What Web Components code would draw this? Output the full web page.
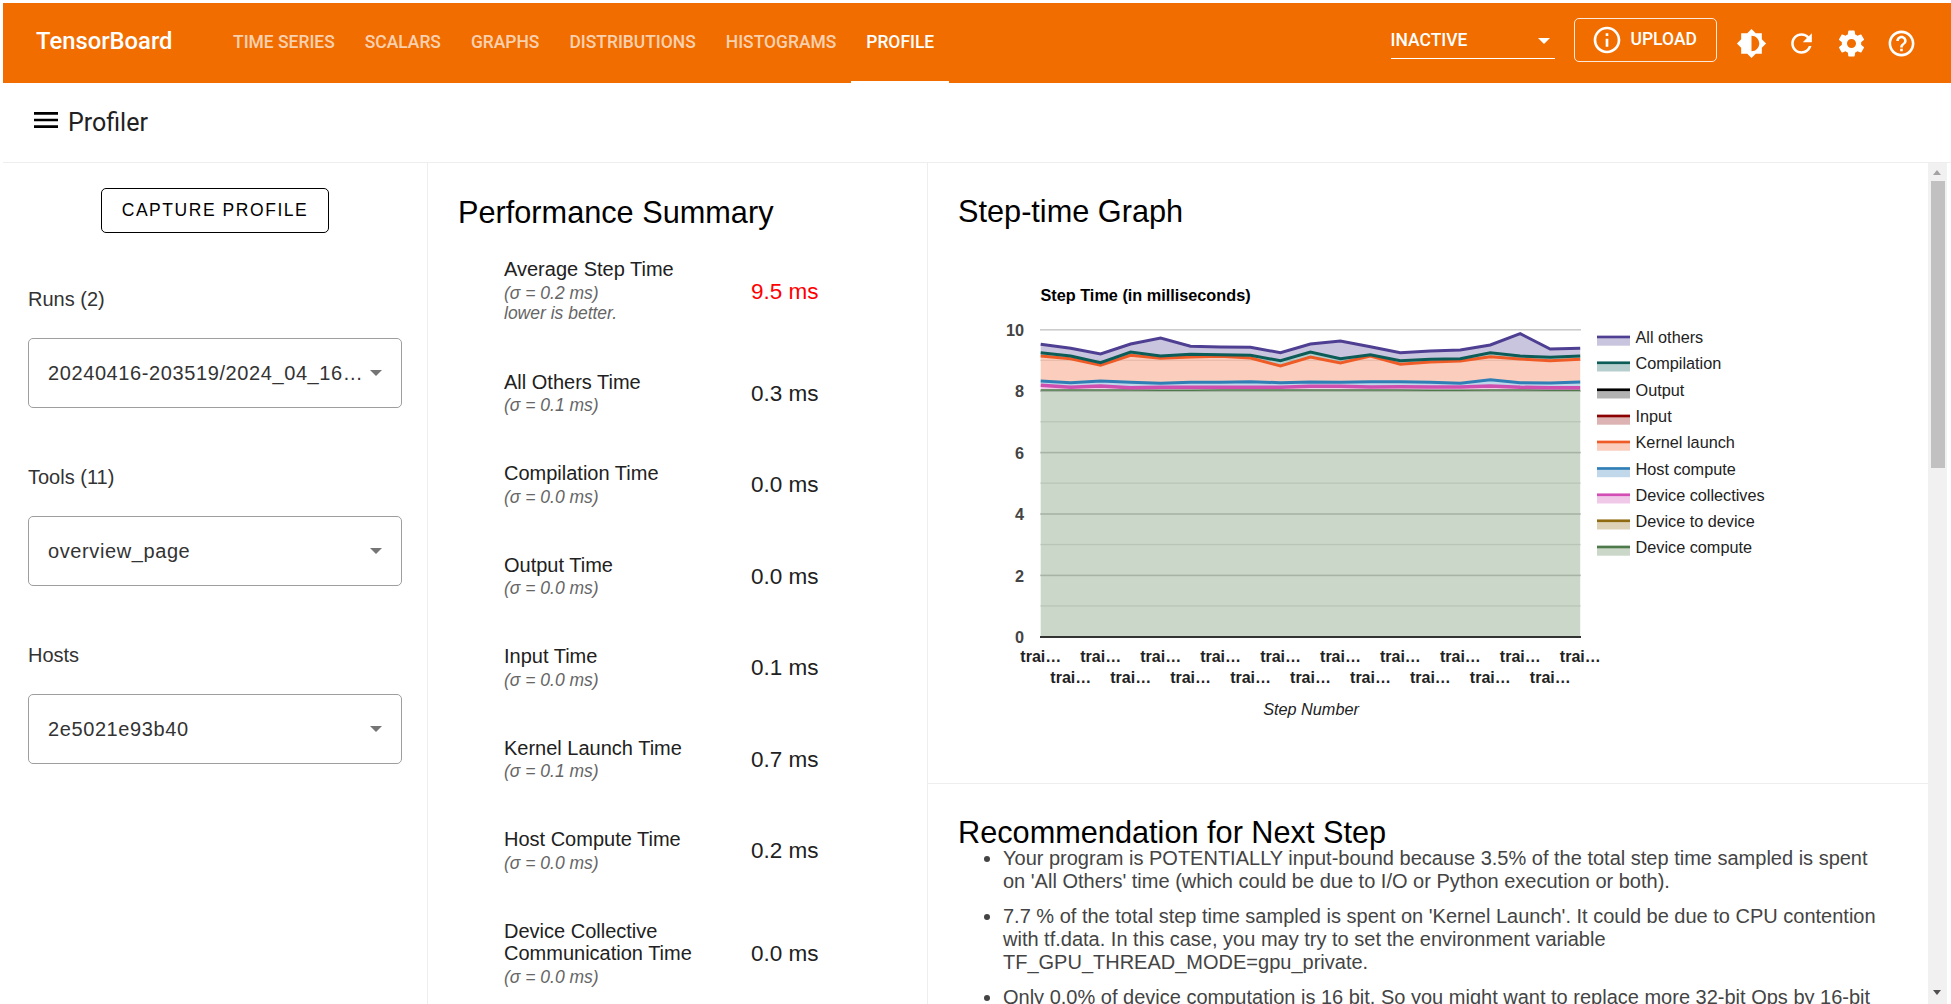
<!DOCTYPE html>
<html lang="en">
<head>
<meta charset="utf-8">
<title>TensorBoard</title>
<style>
html,body{margin:0;padding:0;height:100%;overflow:hidden;background:#fff}
body{padding:3px 0 0 3px;box-sizing:border-box;font-family:"Liberation Sans",Arial,sans-serif}
</style>
</head>
<body>
<tb-app>
  <tb-toolbar slot="top">
    <tb-tab>TIME SERIES</tb-tab><tb-tab>SCALARS</tb-tab><tb-tab>GRAPHS</tb-tab><tb-tab>DISTRIBUTIONS</tb-tab><tb-tab>HISTOGRAMS</tb-tab><tb-tab active>PROFILE</tb-tab>
  </tb-toolbar>
  <profiler-bar slot="top">Profiler</profiler-bar>
  <side-panel slot="left">
    <labeled-select label="Runs (2)" value="20240416-203519/2024_04_16…"></labeled-select>
    <labeled-select label="Tools (11)" value="overview_page"></labeled-select>
    <labeled-select label="Hosts" value="2e5021e93b40"></labeled-select>
  </side-panel>
  <perf-summary slot="middle">
    <summary-row value="9.5 ms" sigma="(σ = 0.2 ms)" note="lower is better." alert>Average Step Time</summary-row>
    <summary-row value="0.3 ms" sigma="(σ = 0.1 ms)">All Others Time</summary-row>
    <summary-row value="0.0 ms" sigma="(σ = 0.0 ms)">Compilation Time</summary-row>
    <summary-row value="0.0 ms" sigma="(σ = 0.0 ms)">Output Time</summary-row>
    <summary-row value="0.1 ms" sigma="(σ = 0.0 ms)">Input Time</summary-row>
    <summary-row value="0.7 ms" sigma="(σ = 0.1 ms)">Kernel Launch Time</summary-row>
    <summary-row value="0.2 ms" sigma="(σ = 0.0 ms)">Host Compute Time</summary-row>
    <summary-row value="0.0 ms" sigma="(σ = 0.0 ms)">Device Collective Communication Time</summary-row>
  </perf-summary>
  <step-graph slot="right"></step-graph>
  <rec-section slot="right">
    <rec-item>Your program is POTENTIALLY input-bound because 3.5% of the total step time sampled is spent on 'All Others' time (which could be due to I/O or Python execution or both).</rec-item>
    <rec-item>7.7 % of the total step time sampled is spent on 'Kernel Launch'. It could be due to CPU contention with tf.data. In this case, you may try to set the environment variable TF_GPU_THREAD_MODE=gpu_private.</rec-item>
    <rec-item>Only 0.0% of device computation is 16 bit. So you might want to replace more 32-bit Ops by 16-bit Ops to improve performance (if the reduced accuracy is acceptable).</rec-item>
  </rec-section>
  <fake-scrollbar slot="bar"></fake-scrollbar>
</tb-app>
<script>
function def(name, render){
  customElements.define(name, class extends HTMLElement{
    constructor(){super();this.attachShadow({mode:'open'});}
    connectedCallback(){this.shadowRoot.innerHTML=render(this);}
  });
}
const P={
 bright:'M20 15.31L23.31 12 20 8.69V4h-4.69L12 .69 8.69 4H4v4.69L.69 12 4 15.31V20h4.69L12 23.31 15.31 20H20v-4.69zM12 18V6c3.31 0 6 2.69 6 6s-2.69 6-6 6z',
 refresh:'M17.65 6.35C16.2 4.9 14.21 4 12 4c-4.42 0-7.99 3.58-7.99 8s3.57 8 7.99 8c3.73 0 6.84-2.55 7.73-6h-2.08c-.82 2.33-3.04 4-5.65 4-3.31 0-6-2.69-6-6s2.69-6 6-6c1.66 0 3.14.69 4.22 1.78L13 11h7V4l-2.35 2.35z',
 gear:'M19.43 12.98c.04-.32.07-.64.07-.98s-.03-.66-.07-.98l2.11-1.65c.19-.15.24-.42.12-.64l-2-3.46c-.12-.22-.39-.3-.61-.22l-2.49 1c-.52-.4-1.08-.73-1.69-.98l-.38-2.65C14.46 2.18 14.25 2 14 2h-4c-.25 0-.46.18-.49.42l-.38 2.65c-.61.25-1.17.59-1.69.98l-2.49-1c-.23-.09-.49 0-.61.22l-2 3.46c-.13.22-.07.49.12.64l2.11 1.65c-.04.32-.07.65-.07.98s.03.66.07.98l-2.11 1.65c-.19.15-.24.42-.12.64l2 3.46c.12.22.39.3.61.22l2.49-1c.52.4 1.08.73 1.69.98l.38 2.65c.03.24.24.42.49.42h4c.25 0 .46-.18.49-.42l.38-2.65c.61-.25 1.17-.59 1.69-.98l2.49 1c.23.09.49 0 .61-.22l2-3.46c.12-.22.07-.49-.12-.64l-2.11-1.65zM12 15.5c-1.93 0-3.5-1.57-3.5-3.5s1.57-3.5 3.5-3.5 3.5 1.57 3.5 3.5-1.57 3.5-3.5 3.5z',
 help:'M11 18h2v-2h-2v2zm1-16C6.48 2 2 6.48 2 12s4.48 10 10 10 10-4.48 10-10S17.52 2 12 2zm0 18c-4.41 0-8-3.59-8-8s3.59-8 8-8 8 3.59 8 8-3.59 8-8 8zm0-14c-2.21 0-4 1.79-4 4h2c0-1.1.9-2 2-2s2 .9 2 2c0 2-3 1.75-3 5h2c0-2.25 3-2.5 3-5 0-2.21-1.79-4-4-4z',
 info:'M11 7h2v2h-2zm0 4h2v6h-2zm1-9C6.48 2 2 6.48 2 12s4.48 10 10 10 10-4.48 10-10S17.52 2 12 2zm0 18c-4.41 0-8-3.59-8-8s3.59-8 8-8 8 3.59 8 8-3.59 8-8 8z',
 menu:'M3 18h18v-2H3v2zm0-5h18v-2H3v2zm0-7v2h18V6H3z'
};
const svgIcon=(n,s=30)=>`<svg width="${s}" height="${s}" viewBox="0 0 24 24" fill="currentColor" style="display:block;flex:none"><path d="${P[n]}"/></svg>`;

def('tb-app',()=>`<style>
:host{display:flex;flex-direction:column;height:1001px;overflow:hidden}
.main{flex:1;display:flex;min-height:0;overflow:hidden;padding-right:4px}
.left{flex:none;border-right:1px solid #eee;width:424px}
.mid{width:499px;flex:none;border-right:1px solid #eee}
.right{flex:1;min-width:0}
</style>
<slot name="top"></slot>
<div class="main">
 <div class="left"><slot name="left"></slot></div>
 <div class="mid"><slot name="middle"></slot></div>
 <div class="right"><slot name="right"></slot></div>
 <slot name="bar"></slot>
</div>`);

def('tb-toolbar',()=>`<style>
:host{display:flex;align-items:center;height:80px;background:#f16d00;color:#fff;font-family:Roboto,sans-serif;padding:0 24.5px 0 33px;box-sizing:border-box}
.logo{font-size:23.8px;font-weight:500;width:138px;margin-right:44px;position:relative;top:-2px;white-space:nowrap}
.tabs{display:flex;height:100%}
.sel{margin-left:auto;width:164px;height:45px;margin-top:-15px;border-bottom:1px solid #fff;display:flex;align-items:center;justify-content:space-between;box-sizing:border-box;font-size:17.5px;font-weight:500;padding:8px 5px 0 0;position:relative;top:1px}
.tri{width:0;height:0;border-left:6px solid transparent;border-right:6px solid transparent;border-top:6px solid #fff;position:relative;top:1px}
.up{margin-left:19px;width:143px;height:44px;margin-top:-7px;border:1px solid rgba(255,255,255,.85);border-radius:5px;display:flex;align-items:center;box-sizing:border-box;padding-left:16px;gap:8px;font-size:17.5px;font-weight:500}
.up span{position:relative;top:-1px}
.icons{display:flex;margin-left:10px}
.ic{width:50px;height:50px;display:flex;align-items:center;justify-content:center}
</style>
<div class="logo">TensorBoard</div>
<div class="tabs"><slot></slot></div>
<div class="sel"><span>INACTIVE</span><i class="tri"></i></div>
<div class="up">${svgIcon('info',32)}<span>UPLOAD</span></div>
<div class="icons"><div class="ic">${svgIcon('bright',31)}</div><div class="ic">${svgIcon('refresh',31)}</div><div class="ic">${svgIcon('gear',31)}</div><div class="ic">${svgIcon('help',31)}</div></div>`);

def('tb-tab',h=>`<style>
:host{display:flex;align-items:center;padding:0 15px 3px;font-size:17.45px;font-weight:500;height:100%;box-sizing:border-box;color:rgba(255,255,255,${h.hasAttribute('active')?1:.7});white-space:nowrap;position:relative}
.u{position:absolute;left:0;right:0;bottom:0;height:2.5px;background:#fff}
</style><slot></slot>${h.hasAttribute('active')?'<div class="u"></div>':''}`);

def('profiler-bar',()=>`<style>
:host{display:flex;align-items:center;height:80px;box-sizing:border-box;border-bottom:1px solid #eee;padding-left:27px;color:#212121;font-family:Roboto,sans-serif;font-size:25px}
svg{color:#000;position:relative;top:-3px}
span{margin-left:6px}
</style>${svgIcon('menu',32)}<span><slot></slot></span>`);

def('side-panel',()=>`<style>
:host{display:block;padding:25px 0 0 25px;height:100%;box-sizing:border-box}
button{display:block;margin:0 0 55px 73px;width:228px;height:45px;background:#fff;border:1px solid #000;border-radius:5px;font:17.5px "Liberation Sans",Arial,sans-serif;letter-spacing:1.55px;color:#000;padding:0}
</style><button>CAPTURE PROFILE</button><slot></slot>`);

def('labeled-select',h=>`<style>
:host{display:block;margin-bottom:58px;width:374px;color:#333;font:20px "Liberation Sans",Arial,sans-serif}
.l{line-height:22px;margin-bottom:28px;color:#333}
.b{height:70px;border:1px solid #9e9e9e;border-radius:5px;box-sizing:border-box;display:flex;align-items:center;padding:0 19px;letter-spacing:.6px;justify-content:space-between}
.b span{white-space:nowrap}
.t{width:0;height:0;border-left:6.5px solid transparent;border-right:6.5px solid transparent;border-top:6.5px solid #757575;flex:none}
</style><div class="l">${h.getAttribute('label')}</div><div class="b"><span>${h.getAttribute('value')}</span><i class="t"></i></div>`);

def('perf-summary',()=>`<style>
:host{display:block;padding:32px 0 0 30px}
h2{margin:0 0 27px;font:400 30.7px/36px "Liberation Sans",Arial,sans-serif;color:#000}
.r{padding-left:46px}
</style><h2>Performance Summary</h2><div class="r"><slot></slot></div>`);

def('summary-row',h=>`<style>
:host{display:flex;align-items:center;margin-bottom:47px}
.a{width:247px;flex:none;box-sizing:border-box;padding-right:10px;font:20px/22.5px "Liberation Sans",Arial,sans-serif;color:#212121}
.s{font-style:italic;font-size:17.5px;color:#666;line-height:22px;position:relative;top:1px}
.s + .s{top:0;line-height:21px}
.v{font:22.5px "Liberation Sans",Arial,sans-serif;color:${h.hasAttribute('alert')?'#f00':'#212121'};position:relative;top:1px}
</style><div class="a"><slot></slot><div class="s">${h.getAttribute('sigma')}</div>${h.getAttribute('note')?`<div class="s">${h.getAttribute('note')}</div>`:''}</div><div class="v">${h.getAttribute('value')}</div>`);

/* chart */
const X=i=>1040.7+i*29.97, ZY=z=>270+z/3;
const D={
 others:[223,235,252,222,204,229,231,232,248,222,213,230,248,243,240,225,191,237,235],
 comp:[248,258,278,246,258,253,254,256,272,246,266,254,272,268,266,248,258,262,258],
 kern:[258,266,286,256,265,261,259,264,288,261,279,258,283,276,273,260,267,272,268],
 host:[333,338,333,337,340,337,337,335,338,336,337,335,335,337,340,329,338,339,336],
 coll:[346,352,348,353,352,352,352,352,352,349,349,351,350,351,351,348,352,353,353],
 dev:[360,360,360,360,361,361,360,360,360,360,360,360,360,361,361,360,360,361,361]
};
const line=a=>a.map((z,i)=>X(i).toFixed(1)+','+ZY(z).toFixed(1)).join(' ');
const band=(top,bot)=>{
  const t=top.map((z,i)=>X(i).toFixed(1)+','+ZY(z).toFixed(1));
  const b=bot?bot.map((z,i)=>X(i).toFixed(1)+','+ZY(z).toFixed(1)).reverse():[X(18).toFixed(1)+',637',X(0).toFixed(1)+',637'];
  return t.concat(b).join(' ');
};
const LEG=[['All others','#4f3f93',337.2],['Compilation','#0c5c58',363],['Output','#000',390],['Input','#8b0000',416.2],['Kernel launch','#ef5b26',442.2],['Host compute','#2f7eb6',468.7],['Device collectives','#d24db4',495],['Device to device','#8f6a10',521],['Device compute','#4e7a4b',547.2]];
function chartSvg(){
  let s='';
  for(let v=0;v<=10;v++){
    const y=637-v*30.7;
    s+=`<rect x="1040" y="${(y-1).toFixed(1)}" width="541" height="${v%2?1.3:1.6}" fill="${v==0?'#333':(v%2?'#e6e6e6':'#ccc')}"/>`;
  }
  const fills=[[D.others,D.comp,'#4f3f93'],[D.comp,D.kern,'#0c5c58'],[D.kern,D.host,'#ef5b26'],[D.host,D.coll,'#2f7eb6'],[D.coll,D.dev,'#d24db4'],[D.dev,null,'#4e7a4b']];
  fills.forEach(f=>{s+=`<polygon points="${band(f[0],f[1])}" fill="${f[2]}" fill-opacity=".3"/>`;});
  [[D.dev,'#4e7a4b',1.5],[D.coll,'#cf4fb0',3.5],[D.host,'#2f7eb6',3],[D.kern,'#ef5b26',3],[D.comp,'#0c5c58',3],[D.others,'#4f3f93',3]].forEach(l=>{
    s+=`<polyline points="${line(l[0])}" fill="none" stroke="${l[1]}" stroke-width="${l[2]}"/>`;
  });
  s+=`<rect x="1040" y="636" width="541" height="2" fill="#333"/>`;
  s+=`<text x="1040.5" y="300.5" font-size="16.25" font-weight="700" fill="#000">Step Time (in milliseconds)</text>`;
  [10,8,6,4,2,0].forEach(v=>{s+=`<text x="1024" y="${(637-v*30.7+6).toFixed(1)}" text-anchor="end" font-size="16.25" font-weight="700" fill="#444">${v}</text>`;});
  for(let i=0;i<19;i++){
    const odd=i%2;
    s+=`<text x="${(1040.8+i*29.97).toFixed(1)}" y="${odd?683:662}" text-anchor="middle" font-size="16" font-weight="700" fill="#222">trai…</text>`;
  }
  s+=`<text x="1311" y="715" text-anchor="middle" font-size="16.25" font-style="italic" fill="#222">Step Number</text>`;
  LEG.forEach(l=>{
    const t=l[2]-1.5;
    s+=`<rect x="1597" y="${t.toFixed(1)}" width="33" height="10" fill="${l[1]}" fill-opacity=".3"/>`;
    s+=`<rect x="1597" y="${t.toFixed(1)}" width="33" height="2.6" fill="${l[1]}"/>`;
    s+=`<text x="1635.5" y="${(l[2]+6).toFixed(1)}" font-size="16.25" fill="#222">${l[0]}</text>`;
  });
  return s;
}
def('step-graph',()=>`<style>
:host{display:block;box-sizing:border-box;height:621px;border-bottom:1px solid #eee;padding:31px 0 0 30px}
h2{margin:0 0 40px;font:400 30.7px/36px "Liberation Sans",Arial,sans-serif;color:#000}
svg{display:block;margin-left:-30px;font-family:"Liberation Sans",Arial,sans-serif}
</style><h2>Step-time Graph</h2><svg width="1000" height="470" viewBox="928 270 1000 470">${chartSvg()}</svg>`);

def('rec-section',()=>`<style>
:host{display:block;padding:31px 0 0 30px}
h2{margin:0 0 -4px;font:400 30.7px/36px "Liberation Sans",Arial,sans-serif;color:#000}
.l{padding:0 38px 0 45px;margin:0}
</style><h2>Recommendation for Next Step</h2><div class="l"><slot></slot></div>`);
def('rec-item',()=>`<style>
:host{display:list-item;list-style:disc;font:20px/23px "Liberation Sans",Arial,sans-serif;color:#444;margin-bottom:11.8px}
</style><slot></slot>`);

def('fake-scrollbar',()=>`<style>
:host{display:block;width:19px;flex:none;background:#f1f1f1;position:relative}
.th{margin:18px 2px 0 3px;height:287px;background:#c1c1c1}
.u,.d{position:absolute;left:5px;width:0;height:0;border-left:4.5px solid transparent;border-right:4.5px solid transparent}
.u{top:7px;border-bottom:5px solid #a3a3a3}
.d{top:827px;border-top:5px solid #505050}
</style><div class="u"></div><div class="th"></div><div class="d"></div>`);
</script>
</body>
</html>
